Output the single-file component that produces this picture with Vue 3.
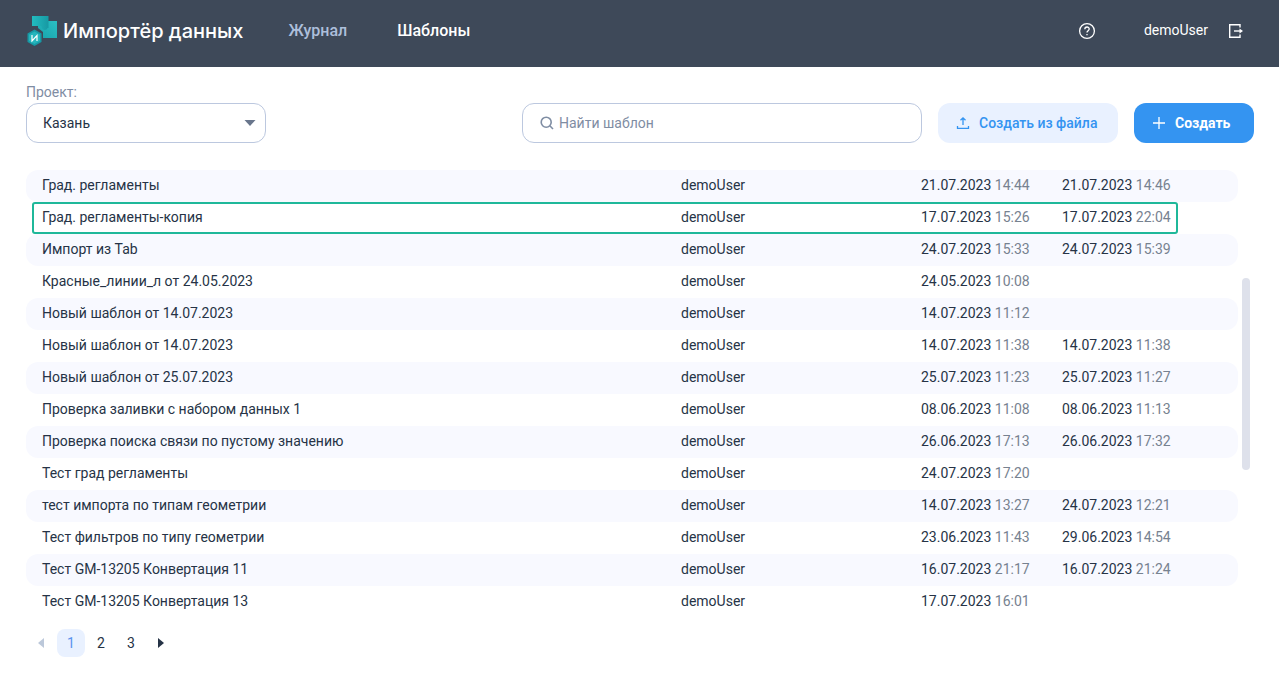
<script setup>
import { ref } from 'vue'

const project = ref('Казань')
const query = ref('')
const page = ref(1)
const pages = [1, 2, 3]

const rows = [
  ['Град. регламенты', '21.07.2023 14:44', '21.07.2023 14:46'],
  ['Град. регламенты-копия', '17.07.2023 15:26', '17.07.2023 22:04'],
  ['Импорт из Tab', '24.07.2023 15:33', '24.07.2023 15:39'],
  ['Красные_линии_л от 24.05.2023', '24.05.2023 10:08', ''],
  ['Новый шаблон от 14.07.2023', '14.07.2023 11:12', ''],
  ['Новый шаблон от 14.07.2023', '14.07.2023 11:38', '14.07.2023 11:38'],
  ['Новый шаблон от 25.07.2023', '25.07.2023 11:23', '25.07.2023 11:27'],
  ['Проверка заливки с набором данных 1', '08.06.2023 11:08', '08.06.2023 11:13'],
  ['Проверка поиска связи по пустому значению', '26.06.2023 17:13', '26.06.2023 17:32'],
  ['Тест град регламенты', '24.07.2023 17:20', ''],
  ['тест импорта по типам геометрии', '14.07.2023 13:27', '24.07.2023 12:21'],
  ['Тест фильтров по типу геометрии', '23.06.2023 11:43', '29.06.2023 14:54'],
  ['Тест GM-13205 Конвертация 11', '16.07.2023 21:17', '16.07.2023 21:24'],
  ['Тест GM-13205 Конвертация 13', '17.07.2023 16:01', ''],
].map(([name, created, updated], i) => ({
  name,
  user: 'demoUser',
  dates: [created.split(' '), updated.split(' ')],
  selected: i === 1,
}))
</script>

<template>
  <div class="page">
    <header class="topbar">
      <a href="#" class="brand">
        <svg class="logo" width="30" height="33" viewBox="0 -2 30 33" aria-hidden="true">
          <defs>
            <linearGradient id="tileBack" x1="0" y1="0" x2="1" y2="0">
              <stop offset="0" stop-color="#22bcc0" />
              <stop offset="1" stop-color="#1799a3" />
            </linearGradient>
            <linearGradient id="tileFront" x1="0" y1="1" x2="1" y2="0">
              <stop offset="0" stop-color="#17a3ac" />
              <stop offset="1" stop-color="#2bbec3" />
            </linearGradient>
          </defs>
          <path d="M15 5H30V22H16V16L11 12V9Z" fill="url(#tileFront)" />
          <path d="M5 0H21.500V12H20.500C20 14.500 15.500 14.500 15 12L14 10H5Z" fill="url(#tileBack)" />
          <path d="M7.500 12.500L15.500 17V26L7.500 31L-0.500 26V17Z" fill="#3e4959" />
          <path d="M7.500 13.500L14.500 17.500V26L7.500 30L0.500 26V17.500Z" fill="#1799a5" />
          <path d="M7.500 15.500L13 18.500V25L7.500 28L2 25V18.500Z" fill="#25b5bc" />
          <path d="M5 19V25L10 19.500V25" fill="none" stroke="#fff" stroke-width="1.200" />
        </svg>
        <span>Импортёр данных</span>
      </a>
      <nav class="nav">
        <a href="#">Журнал</a>
        <a href="#" class="active">Шаблоны</a>
      </nav>
      <div class="account">
        <button type="button" class="icon-btn help" aria-label="Справка">
          <svg width="18" height="18" viewBox="0 0 18 18" fill="none" stroke="#fff">
            <circle cx="9" cy="9" r="7.400" stroke-width="1.300" />
            <path d="M6.800 7.300C6.800 4.300 11.200 4.300 11.200 7C11.200 8.700 9 8.700 9 10.500" stroke-width="1.300" />
            <path d="M9 12V13.300" stroke-width="1.300" />
          </svg>
        </button>
        <span class="user">demoUser</span>
        <button type="button" class="icon-btn" aria-label="Выйти">
          <svg width="16" height="16" viewBox="0 0 16 16" fill="none" stroke="#fff" stroke-width="1.400">
            <path d="M12 4.500V1.700H1.700V14.300H12V11.500" />
            <path d="M6 8H13" />
            <path d="M11.500 5.500L15 8L11.500 10.500Z" fill="#fff" stroke="none" />
          </svg>
        </button>
      </div>
    </header>

    <main class="content">
      <div class="toolbar">
        <div class="field">
          <label for="project">Проект:</label>
          <div class="select-box">
            <select id="project" v-model="project">
              <option>Казань</option>
            </select>
            <svg class="caret" width="12" height="6" viewBox="0 0 12 6" aria-hidden="true">
              <path d="M0.500 0H11.500L6 6Z" fill="#69768c" />
            </svg>
          </div>
        </div>
        <div class="search">
          <svg width="14" height="14" viewBox="0 0 14 14" fill="none" stroke="#7f8da3" stroke-width="1.600" aria-hidden="true">
            <circle cx="6.200" cy="6.200" r="5" />
            <path d="M9.800 9.800L13 13" />
          </svg>
          <input v-model="query" type="text" placeholder="Найти шаблон" aria-label="Найти шаблон" />
        </div>
        <button type="button" class="btn soft">
          <svg width="14" height="14" viewBox="0 0 14 14" fill="none" stroke="#3494f1" stroke-width="1.300" aria-hidden="true">
            <path d="M7 9V2M4.500 4.300L7 1.800L9.500 4.300M1.500 10V12.300H12.500V10" />
          </svg>
          Создать из файла
        </button>
        <button type="button" class="btn primary">
          <svg width="12" height="12" viewBox="0 0 12 12" stroke="#fff" stroke-width="1.300" aria-hidden="true">
            <path d="M6 0V12M0 6H12" />
          </svg>
          Создать
        </button>
      </div>

      <div class="list">
        <table>
          <colgroup>
            <col />
            <col class="c-user" />
            <col class="c-created" />
            <col class="c-updated" />
          </colgroup>
          <tbody>
            <tr v-for="(row, i) in rows" :key="i" :class="{ selected: row.selected }">
              <td>{{ row.name }}</td>
              <td>{{ row.user }}</td>
              <td v-for="(d, k) in row.dates" :key="k">
                {{ d[0] }} <span class="time">{{ d[1] }}</span>
              </td>
            </tr>
          </tbody>
        </table>
        <div class="track"><div class="thumb"></div></div>
      </div>

      <nav class="pager" aria-label="Страницы">
        <button type="button" class="arrow" aria-label="Назад" disabled>
          <svg width="6" height="10" viewBox="0 0 6 10"><path d="M6 0V10L0 5Z" fill="#bcc8da" /></svg>
        </button>
        <button
          v-for="n in pages"
          :key="n"
          type="button"
          :class="{ current: n === page }"
          @click="page = n"
        >{{ n }}</button>
        <button type="button" class="arrow" aria-label="Вперёд">
          <svg width="6" height="10" viewBox="0 0 6 10"><path d="M0 0V10L6 5Z" fill="#263346" /></svg>
        </button>
      </nav>
    </main>
  </div>
</template>

<style>
body {
  margin: 0;
  background: #fff;
}
</style>

<style scoped>
.page {
  font-family: Roboto, "Liberation Sans", sans-serif;
  font-size: 14px;
  line-height: 16px;
  color: #263346;
}
.page * {
  box-sizing: border-box;
}
a {
  text-decoration: none;
}
button,
input,
select {
  font: inherit;
  color: inherit;
  margin: 0;
  padding: 0;
  border: 0;
  background: none;
}
svg {
  display: block;
  flex: none;
}
.topbar {
  display: flex;
  align-items: center;
  height: 67px;
  padding: 0 35px 6px 27px;
  background: #3e4959;
  color: #fff;
}
.brand {
  display: flex;
  align-items: center;
  gap: 6px;
  color: #fff;
  font-family: Inter, sans-serif;
  font-size: 20px;
  line-height: 28px;
  font-weight: 500;
}
.nav {
  display: flex;
  gap: 50px;
  margin-left: 45px;
  font-size: 16px;
  line-height: 20px;
  font-weight: 500;
}
.nav a {
  color: #adbfdb;
}
.nav a.active {
  color: #fff;
}
.account {
  display: flex;
  align-items: center;
  margin-left: auto;
}
.help {
  margin-right: 48px;
}
.user {
  margin-right: 20px;
  line-height: 18px;
  padding-bottom: 2px;
}
.content {
  padding: 17px 25px 16px 26px;
}
.toolbar {
  display: flex;
  align-items: flex-end;
  gap: 16px;
}
.field {
  width: 240px;
  margin-right: auto;
}
.field label {
  display: block;
  margin-bottom: 3px;
  color: #7f8da3;
}
.select-box {
  position: relative;
}
select {
  appearance: none;
  width: 100%;
  height: 40px;
  padding: 0 32px 0 16px;
  border: 1px solid #bcc8df;
  border-radius: 12px;
  background: #fff;
}
.caret {
  position: absolute;
  right: 10px;
  top: 17px;
  pointer-events: none;
}
.search {
  display: flex;
  align-items: center;
  gap: 5px;
  width: 400px;
  height: 40px;
  padding: 0 16px 0 17px;
  border: 1px solid #bcc8df;
  border-radius: 12px;
}
.search input {
  flex: 1;
  min-width: 0;
  outline: none;
}
.search input::placeholder {
  color: #7f8da3;
  opacity: 1;
}
.btn {
  display: flex;
  align-items: center;
  height: 40px;
  border-radius: 12px;
  font-weight: 500;
}
.soft {
  width: 180px;
  padding-left: 18px;
  gap: 9px;
  background: #e9f1ff;
  color: #3494f1;
}
.primary {
  width: 120px;
  padding-left: 19px;
  gap: 10px;
  background: #3494f1;
  color: #fff;
  font-weight: 700;
}
.list {
  display: flex;
  gap: 4px;
  margin: 27px 4px 0 0;
}
table {
  flex: 1;
  width: 100%;
  table-layout: fixed;
  border-spacing: 0;
}
.c-user {
  width: 240px;
}
.c-created {
  width: 141px;
}
.c-updated {
  width: 176px;
}
tr {
  position: relative;
}
td {
  height: 32px;
  padding: 0 0 2px;
  white-space: nowrap;
}
td:first-child {
  padding-left: 16px;
  border-radius: 12px 0 0 12px;
}
td:last-child {
  border-radius: 0 12px 12px 0;
}
tr:nth-child(odd) td {
  background: #f8f9ff;
}
.time {
  color: #778290;
}
.selected td:first-child::after {
  content: "";
  position: absolute;
  inset: 0 60px 0 6px;
  border: 2px solid #1fb89a;
  border-radius: 3px;
}
.track {
  position: relative;
  width: 8px;
}
.thumb {
  position: absolute;
  top: 24%;
  width: 100%;
  height: 43%;
  border-radius: 4px;
  background: #dee1eb;
}
.pager {
  display: flex;
  gap: 2px;
  margin: 11px 0 0 1px;
}
.pager button {
  display: flex;
  align-items: center;
  justify-content: center;
  width: 28px;
  height: 28px;
  border-radius: 8px;
}
.pager .current {
  background: #e9f1ff;
  color: #5a93ee;
}
</style>
